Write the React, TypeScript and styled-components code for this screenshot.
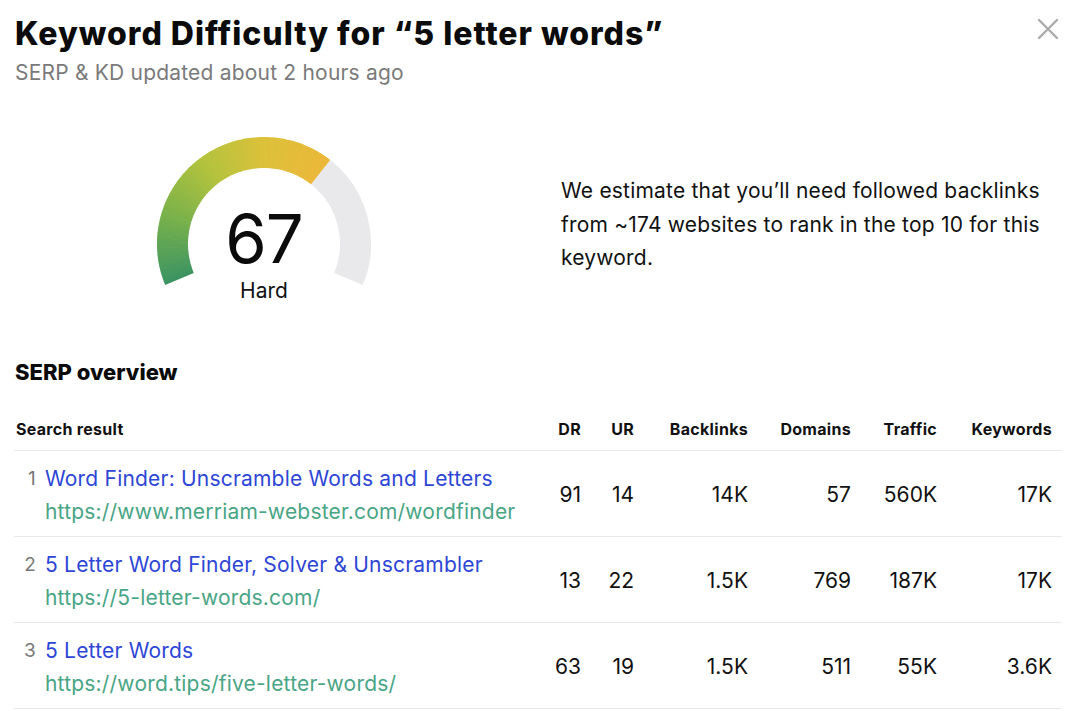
import { ReactElement } from 'react';
import styled, { createGlobalStyle } from 'styled-components';

const GlobalStyle = createGlobalStyle`
	html, body {
		margin: 0;
		padding: 0;
		background: #ffffff;
	}
	body {
		font-family: Inter, "Noto Sans", "Liberation Sans", sans-serif;
		color: #111111;
	}
`;

type Row = {
	title: string;
	url: string;
	dr: string;
	ur: string;
	backlinks: string;
	domains: string;
	traffic: string;
	keywords: string;
};

const rows: Row[] = [
	{
		title: 'Word Finder: Unscramble Words and Letters',
		url: 'https://www.merriam-webster.com/wordfinder',
		dr: '91',
		ur: '14',
		backlinks: '14K',
		domains: '57',
		traffic: '560K',
		keywords: '17K',
	},
	{
		title: '5 Letter Word Finder, Solver & Unscrambler',
		url: 'https://5-letter-words.com/',
		dr: '13',
		ur: '22',
		backlinks: '1.5K',
		domains: '769',
		traffic: '187K',
		keywords: '17K',
	},
	{
		title: '5 Letter Words',
		url: 'https://word.tips/five-letter-words/',
		dr: '63',
		ur: '19',
		backlinks: '1.5K',
		domains: '511',
		traffic: '55K',
		keywords: '3.6K',
	},
];

const columns = ['DR', 'UR', 'Backlinks', 'Domains', 'Traffic', 'Keywords'];

// gauge geometry
const CX = 115;
const CY = 115;
const MID_R = 91.5;
const THICK = 31;
const START = 202.5;
const SWEEP = 225;

const stops: [number, number, number][] = [
	[0x3c, 0x94, 0x62],
	[0x78, 0xb1, 0x4b],
	[0xb2, 0xc2, 0x3d],
	[0xdc, 0xc1, 0x3a],
	[0xec, 0xb8, 0x3a],
];

const mix = (t: number) => {
	const pos = t * (stops.length - 1);
	const i = Math.min(Math.floor(pos), stops.length - 2);
	const f = pos - i;
	const c = stops[i].map((v, k) => Math.round(v + (stops[i + 1][k] - v) * f));
	return `rgb(${c[0]},${c[1]},${c[2]})`;
};

const point = (deg: number) => {
	const a = (deg * Math.PI) / 180;
	return `${(CX + MID_R * Math.cos(a)).toFixed(2)} ${(CY - MID_R * Math.sin(a)).toFixed(2)}`;
};

const arc = (from: number, to: number) =>
	`M ${point(from)} A ${MID_R} ${MID_R} 0 ${from - to > 180 ? 1 : 0} 1 ${point(to)}`;

const Page = styled.div`
	padding: 13px 18px 0 15px;
	position: relative;
`;

const Title = styled.h1`
	margin: 0;
	font-size: 32px;
	line-height: 42px;
	font-weight: 800;
	letter-spacing: 1px;
	color: #0b0b0b;
`;

const Updated = styled.div`
	margin-top: 4px;
	font-size: 21px;
	line-height: 28px;
	color: #7a7a7a;
	letter-spacing: 0.2px;
`;

const CloseButton = styled.button`
	position: absolute;
	top: 17px;
	right: 20px;
	border: 0;
	background: none;
	padding: 0;
	width: 24px;
	height: 24px;
	cursor: pointer;
	color: #ababab;
`;

const Summary = styled.section`
	display: flex;
	align-items: center;
	margin-top: 42px;
`;

const GaugeBox = styled.div`
	position: relative;
	width: 230px;
	height: 175px;
	margin-left: 134px;
`;

const Readout = styled.div`
	position: absolute;
	left: 0;
	right: 0;
	top: 75px;
	display: flex;
	flex-direction: column;
	align-items: center;
`;

const Score = styled.div`
	font-size: 67px;
	line-height: 70px;
	font-weight: 400;
	color: #0b0b0b;
	letter-spacing: -1px;
`;

const Level = styled.div`
	margin-top: 4px;
	font-size: 21px;
	line-height: 26px;
	color: #111111;
`;

const Estimate = styled.p`
	margin: 0 0 0 182px;
	width: 495px;
	font-size: 21px;
	line-height: 33.5px;
	color: #111111;
	letter-spacing: 0.2px;
	position: relative;
	top: 8px;
`;

const SectionTitle = styled.h2`
	margin: 53px 0 0;
	font-size: 22px;
	line-height: 30px;
	font-weight: 800;
	color: #0b0b0b;
`;

const Table = styled.div`
	margin: 24px 0 0 -1px;
`;

const GridRow = styled.div<{ $head?: boolean }>`
	display: grid;
	grid-template-columns: 1fr 60px 53px 114px 103px 86px 115px;
	padding: ${(p) => (p.$head ? '8px 10px 11px 2px' : '10.5px 10px 8.5px 2px')};
	border-bottom: 1px solid #e8e8e8;
	align-items: center;
`;

const HeadCell = styled.div<{ $left?: boolean }>`
	font-size: 16px;
	line-height: 20px;
	font-weight: 700;
	letter-spacing: 0.3px;
	color: #111111;
	text-align: ${(p) => (p.$left ? 'left' : 'right')};
`;

const ResultCell = styled.div`
	display: grid;
	grid-template-columns: 20px 1fr;
	column-gap: 9px;
	font-size: 21px;
	line-height: 33px;
	letter-spacing: 0.2px;
`;

const Index = styled.span`
	text-align: right;
	color: #777777;
	font-size: 19px;
`;

const Links = styled.div`
	display: flex;
	flex-direction: column;
`;

const ResultTitle = styled.a`
	color: #2d46d6;
	text-decoration: none;
	white-space: nowrap;
`;

const ResultUrl = styled.a`
	color: #48a585;
	text-decoration: none;
	white-space: nowrap;
`;

const Value = styled.div`
	font-size: 21px;
	line-height: 26px;
	text-align: right;
	color: #111111;
`;

const Gauge = ({ value }: { value: number }): ReactElement => {
	const filled = (SWEEP * value) / 100;
	const steps = 90;
	const segs = Array.from({ length: steps }, (_, i) => {
		const a = START - (filled * i) / steps;
		const b = START - (filled * (i + 1)) / steps - (i < steps - 1 ? 0.4 : 0);
		return { d: arc(a, b), color: mix(i / (steps - 1)) };
	});
	return (
		<GaugeBox>
			<svg width="230" height="175" viewBox="0 0 230 175">
				<path
					d={arc(START - filled, START - SWEEP)}
					fill="none"
					stroke="#e9e9eb"
					strokeWidth={THICK}
				/>
				{segs.map((s, i) => (
					<path key={i} d={s.d} fill="none" stroke={s.color} strokeWidth={THICK} />
				))}
			</svg>
			<Readout>
				<Score>{value}</Score>
				<Level>Hard</Level>
			</Readout>
		</GaugeBox>
	);
};

export default function App(): ReactElement {
	return (
		<Page>
			<GlobalStyle />
			<Title>Keyword Difficulty for “5 letter words”</Title>
			<Updated>SERP &amp; KD updated about 2 hours ago</Updated>
			<CloseButton aria-label="Close">
				<svg width="24" height="24" viewBox="0 0 24 24">
					<path
						d="M3 3 L21 21 M21 3 L3 21"
						stroke="currentColor"
						strokeWidth="2.4"
						strokeLinecap="round"
					/>
				</svg>
			</CloseButton>

			<Summary>
				<Gauge value={67} />
				<Estimate>
					We estimate that you’ll need followed backlinks from ~174 websites to
					rank in the top 10 for this keyword.
				</Estimate>
			</Summary>

			<SectionTitle>SERP overview</SectionTitle>

			<Table>
				<GridRow $head>
					<HeadCell $left>Search result</HeadCell>
					{columns.map((c) => (
						<HeadCell key={c}>{c}</HeadCell>
					))}
				</GridRow>
				{rows.map((r, i) => (
					<GridRow key={r.url}>
						<ResultCell>
							<Index>{i + 1}</Index>
							<Links>
								<ResultTitle href="#">{r.title}</ResultTitle>
								<ResultUrl href="#">{r.url}</ResultUrl>
							</Links>
						</ResultCell>
						<Value>{r.dr}</Value>
						<Value>{r.ur}</Value>
						<Value>{r.backlinks}</Value>
						<Value>{r.domains}</Value>
						<Value>{r.traffic}</Value>
						<Value>{r.keywords}</Value>
					</GridRow>
				))}
			</Table>
		</Page>
	);
}
